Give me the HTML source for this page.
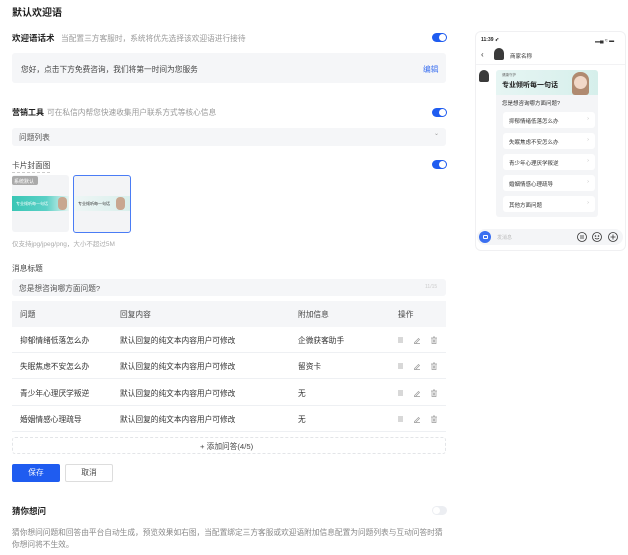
<!DOCTYPE html>
<html><head><meta charset="utf-8"><style>
*{margin:0;padding:0;box-sizing:border-box}
body{width:628px;height:555px;background:#fff;font-family:"Liberation Sans","Noto Sans CJK SC",sans-serif;color:#333;font-size:7.7px;position:relative;overflow:hidden}
.a{position:absolute;white-space:nowrap}
.b{font-weight:bold;color:#1f1f1f}
.g{color:#999}
.tg{position:absolute;width:15px;height:9px;border-radius:5px;background:#1f5cf0}
.tg::after{content:"";position:absolute;right:1px;top:1px;width:7px;height:7px;border-radius:50%;background:#fff}
.tg.off{background:#eceef2}.tg.off::after{left:1px;right:auto}
.box{position:absolute;background:#f5f6f8;border-radius:3px}
.row{position:absolute;left:12px;width:434px;height:26px;border-bottom:1px solid #eef0f3}
.row span{position:absolute;top:8px}
.row svg{position:absolute;top:9px}
.pi{position:absolute;left:503px;width:92px;height:16px;background:#fff;border-radius:3px;font-size:5.5px;color:#333}
.pi span{position:absolute;left:6px;top:5px}.pi i{position:absolute;right:6px;top:4px;font-style:normal;color:#bbb}
.ban{position:absolute;overflow:hidden}
</style></head><body>
<div class="a b" style="left:12px;top:4px;font-size:10px">默认欢迎语</div>

<div class="a b" style="left:12px;top:32px;font-size:8.5px">欢迎语话术</div>
<div class="a g" style="left:61px;top:33px">当配置三方客服时，系统将优先选择该欢迎语进行接待</div>
<div class="tg" style="left:432px;top:33px"></div>
<div class="box" style="left:12px;top:53px;width:434px;height:30px"></div>
<div class="a" style="left:21px;top:64px;color:#444">您好，点击下方免费咨询，我们将第一时间为您服务</div>
<div class="a" style="left:423px;top:64px;color:#3a6ff0">编辑</div>

<div class="a b" style="left:12px;top:107px;font-size:8px">营销工具</div>
<div class="a g" style="left:47px;top:107px">可在私信内帮您快速收集用户联系方式等核心信息</div>
<div class="tg" style="left:432px;top:108px"></div>
<div class="box" style="left:12px;top:128px;width:434px;height:18px"></div>
<div class="a" style="left:19px;top:132px;color:#555">问题列表</div>
<div class="a g" style="left:434px;top:130px;font-size:6px">⌄</div>

<div class="a" style="left:12px;top:160px;color:#444;border-bottom:1px dashed #ccc;padding-bottom:1px">卡片封面图</div>
<div class="tg" style="left:432px;top:160px"></div>
<div class="box" style="left:12px;top:175px;width:57px;height:57px;background:#f3f4f6"></div>
<div class="a" style="left:12px;top:176px;width:26px;height:9px;background:#aaa;color:#fff;font-size:5px;padding:2px 2px;border-radius:2px">系统默认</div>
<div class="ban" style="left:12px;top:196px;width:57px;height:15px;background:linear-gradient(90deg,#39c6b5,#5ad0c6 60%,#e8f5f3)"><span class="a" style="left:4px;top:5px;color:#fff;font-size:4px">专业倾听每一句话</span><span class="a" style="left:46px;top:1px;width:9px;height:13px;border-radius:4px;background:#c8a790"></span></div>
<div class="box" style="left:73px;top:175px;width:58px;height:58px;border:1px solid #4a7cf5;background:#f3f4f6"></div>
<div class="ban" style="left:74px;top:196px;width:56px;height:15px;background:linear-gradient(90deg,#eef6f5,#d9efec)"><span class="a" style="left:4px;top:5px;color:#333;font-size:4px">专业倾听每一句话</span><span class="a" style="left:42px;top:1px;width:9px;height:13px;border-radius:4px;background:#c8a790"></span></div>
<div class="a" style="left:12px;top:238px;color:#aaa;font-size:6.5px">仅支持jpg/jpeg/png，大小不超过5M</div>

<div class="a" style="left:12px;top:263px;color:#444">消息标题</div>
<div class="box" style="left:12px;top:279px;width:434px;height:17px"></div>
<div class="a" style="left:19px;top:283px;color:#555">您是想咨询哪方面问题?</div>
<div class="a" style="left:425px;top:284px;color:#ccc;font-size:5px">11/15</div>

<div class="box" style="left:12px;top:301px;width:434px;height:26px;border-radius:0"></div>
<div class="a" style="left:20px;top:309px;color:#444">问题</div>
<div class="a" style="left:120px;top:309px;color:#444">回复内容</div>
<div class="a" style="left:298px;top:309px;color:#444">附加信息</div>
<div class="a" style="left:398px;top:309px;color:#444">操作</div>

<svg width="0" height="0" style="position:absolute"><defs>
<g id="i1"><path d="M1 2h5M1 4h5M1 6h5" stroke="#999" stroke-width=".8"/></g>
<g id="i2"><path d="M1.5 6.5l4-4 1 1-4 4h-1zM1 7.5h6" stroke="#999" stroke-width=".7" fill="none"/></g>
<g id="i3"><path d="M1 2h6M3 1h2M2 2.5v5h4v-5M3.5 3.5v3M4.5 3.5v3" stroke="#999" stroke-width=".7" fill="none"/></g>
</defs></svg>

<div class="row" style="top:327px"><span style="left:8px">抑郁情绪低落怎么办</span><span style="left:108px">默认回复的纯文本内容用户可修改</span><span style="left:286px">企微获客助手</span><svg style="left:385px" width="8" height="8"><use href="#i1"/></svg><svg style="left:401px" width="8" height="8"><use href="#i2"/></svg><svg style="left:418px" width="8" height="8"><use href="#i3"/></svg></div>
<div class="row" style="top:353px"><span style="left:8px">失眠焦虑不安怎么办</span><span style="left:108px">默认回复的纯文本内容用户可修改</span><span style="left:286px">留资卡</span><svg style="left:385px" width="8" height="8"><use href="#i1"/></svg><svg style="left:401px" width="8" height="8"><use href="#i2"/></svg><svg style="left:418px" width="8" height="8"><use href="#i3"/></svg></div>
<div class="row" style="top:380px"><span style="left:8px">青少年心理厌学叛逆</span><span style="left:108px">默认回复的纯文本内容用户可修改</span><span style="left:286px">无</span><svg style="left:385px" width="8" height="8"><use href="#i1"/></svg><svg style="left:401px" width="8" height="8"><use href="#i2"/></svg><svg style="left:418px" width="8" height="8"><use href="#i3"/></svg></div>
<div class="row" style="top:406px"><span style="left:8px">婚姻情感心理疏导</span><span style="left:108px">默认回复的纯文本内容用户可修改</span><span style="left:286px">无</span><svg style="left:385px" width="8" height="8"><use href="#i1"/></svg><svg style="left:401px" width="8" height="8"><use href="#i2"/></svg><svg style="left:418px" width="8" height="8"><use href="#i3"/></svg></div>

<div class="a" style="left:12px;top:437px;width:434px;height:17px;border:1px dashed #e3e5e8;border-radius:3px"></div>
<div class="a" style="left:200px;top:441px;color:#444">+ 添加问答(4/5)</div>

<div class="a" style="left:12px;top:464px;width:48px;height:18px;background:#1f5cf0;border-radius:2px;color:#fff;text-align:center;line-height:18px">保存</div>
<div class="a" style="left:65px;top:464px;width:48px;height:18px;border:1px solid #ddd;border-radius:2px;text-align:center;line-height:16px;color:#444">取消</div>

<div class="a b" style="left:12px;top:505px;font-size:8.5px">猜你想问</div>
<div class="tg off" style="left:432px;top:506px"></div>
<div class="a" style="left:12px;top:527px;color:#888;font-size:7.7px;line-height:12px">猜你想问问题和回答由平台自动生成，预览效果如右图，当配置绑定三方客服或欢迎语附加信息配置为问题列表与互动问答时猜<br>你想问将不生效。</div>

<!-- phone -->
<div class="a" style="left:475px;top:31px;width:151px;height:220px;border:1px solid #f0f0f2;border-radius:6px;background:#fff"></div>
<div class="a b" style="left:481px;top:37px;font-size:5px">11:39 ➶</div>
<div class="a" style="left:595px;top:37px;font-size:5px">▂▄ ≈ ▬</div>
<div class="a" style="left:481px;top:50px;font-size:8px;color:#333">‹</div>
<div class="a" style="left:494px;top:48px;width:10px;height:12px;border-radius:5px 5px 2px 2px;background:#3a3a3a"></div>
<div class="a" style="left:510px;top:52px;font-size:5.5px">商家名称</div>
<div class="a" style="left:476px;top:64px;width:149px;border-top:1px solid #f2f2f4"></div>
<div class="a" style="left:479px;top:70px;width:10px;height:12px;border-radius:5px 5px 2px 2px;background:#3a3a3a"></div>
<div class="box" style="left:496px;top:70px;width:102px;height:147px;background:#f4f5f7"></div>
<div class="ban" style="left:496px;top:70px;width:102px;height:25px;background:linear-gradient(90deg,#e6f5f3,#d6efeb);border-radius:3px 3px 0 0"><span class="a" style="left:6px;top:3px;font-size:3.5px;color:#666">健康守护</span><span class="a b" style="left:6px;top:10px;font-size:7px">专业倾听每一句话</span><span class="a" style="left:76px;top:2px;width:17px;height:23px;border-radius:8px 8px 3px 3px;background:#b08a70"></span><span class="a" style="left:78px;top:6px;width:13px;height:13px;border-radius:50%;background:#f1d8c8"></span></div>
<div class="a" style="left:502px;top:99px;font-size:5.5px">您是想咨询哪方面问题?</div>
<div class="pi" style="top:112px"><span>抑郁情绪低落怎么办</span><i>›</i></div>
<div class="pi" style="top:133px"><span>失眠焦虑不安怎么办</span><i>›</i></div>
<div class="pi" style="top:154px"><span>青少年心理厌学叛逆</span><i>›</i></div>
<div class="pi" style="top:175px"><span>婚姻情感心理疏导</span><i>›</i></div>
<div class="pi" style="top:196px"><span>其他方面问题</span><i>›</i></div>
<div class="a" style="left:477px;top:229px;width:146px;height:16px;background:#f4f5f7;border-radius:8px"></div>
<div class="a" style="left:479px;top:231px;width:12px;height:12px;border-radius:50%;background:#3a6ff0"></div>
<div class="a" style="left:483px;top:235px;width:5px;height:4px;border:1px solid #fff;border-radius:1px"></div>
<div class="a g" style="left:497px;top:234px;font-size:5px;color:#bbb">发消息</div>
<svg class="a" style="left:576px;top:231px" width="44" height="12"><g fill="none" stroke="#333" stroke-width=".8"><circle cx="6" cy="6" r="4.5"/><path d="M5 4v4M7 4v4"/><circle cx="21" cy="6" r="4.5"/><circle cx="19.5" cy="5" r=".4"/><circle cx="22.5" cy="5" r=".4"/><path d="M19 7.2q2 1.6 4 0"/><circle cx="37" cy="6" r="4.5"/><path d="M37 3.5v5M34.5 6h5"/></g></svg>
</body></html>
